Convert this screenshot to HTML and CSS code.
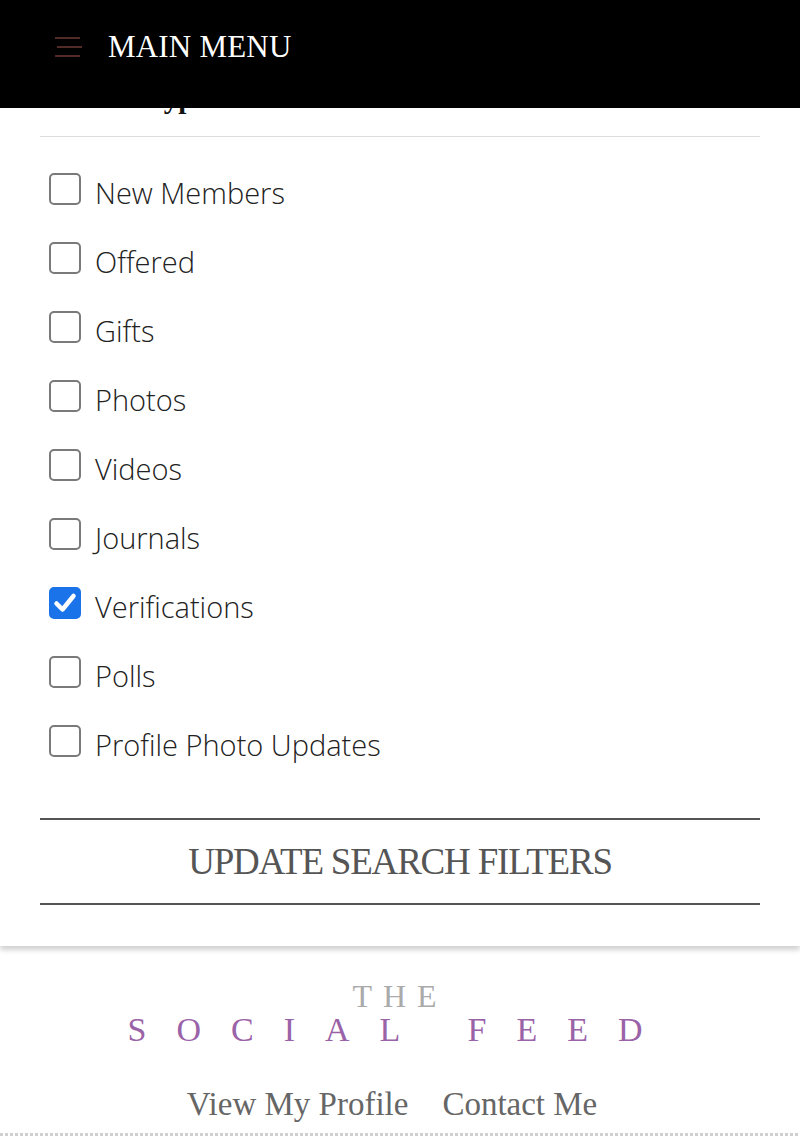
FILE: index.html
```html
<!DOCTYPE html>
<html lang="en">
<head>
  <meta charset="UTF-8">
  <meta name="viewport" content="width=device-width, initial-scale=1.0">
  <title>The Social Feed - Filters</title>
  <link rel="stylesheet" href="styles.css">
</head>
<body>
  <header class="topbar">
    <svg class="burger" width="30" height="22" viewBox="0 0 30 22">
      <line x1="1" y1="2" x2="26" y2="2" />
      <line x1="3" y1="11" x2="28" y2="11" />
      <line x1="1" y1="20" x2="26" y2="20" />
    </svg>
    <span class="menu-label">MAIN MENU</span>
  </header>

  <section class="card">
    <h2 class="card-title">Content Types</h2>

    <ul class="filters">
      <li><span class="box"></span><span class="label">New Members</span></li>
      <li><span class="box"></span><span class="label">Offered</span></li>
      <li><span class="box"></span><span class="label">Gifts</span></li>
      <li><span class="box"></span><span class="label">Photos</span></li>
      <li><span class="box"></span><span class="label">Videos</span></li>
      <li><span class="box"></span><span class="label">Journals</span></li>
      <li><span class="box checked">
        <svg width="26" height="26" viewBox="0 0 26 26"><path d="M4.5 13.5 L10.5 19.5 L21.5 6" /></svg>
      </span><span class="label">Verifications</span></li>
      <li><span class="box"></span><span class="label">Polls</span></li>
      <li><span class="box"></span><span class="label">Profile Photo Updates</span></li>
    </ul>

    <button class="update-btn">UPDATE SEARCH FILTERS</button>
  </section>

  <footer class="footer">
    <div class="logo">
      <div class="logo-the">THE</div>
      <div class="logo-name">SOCIAL FEED</div>
    </div>
    <nav class="footer-links">
      <a href="#">View My Profile</a>
      <a href="#">Contact Me</a>
    </nav>
    <div class="dots"></div>
  </footer>
</body>
</html>
```

FILE: styles.css
```css
* {
  margin: 0;
  padding: 0;
  box-sizing: border-box;
}
body {
  background: #ffffff;
  font-family: 'Liberation Serif', serif;
  color: #222;
}
.topbar {
  position: fixed;
  top: 0;
  left: 0;
  right: 0;
  height: 108px;
  background: #000;
  display: flex;
  align-items: center;
  padding: 0 0 14px 54px;
  z-index: 10;
}
.burger {
  stroke: #6e3a36;
  stroke-width: 1.5;
  margin-right: 24px;
}
.menu-label {
  color: #fff;
  font-size: 31px;
  letter-spacing: 0.2px;
}
.card {
  padding: 0 40px 41px;
  box-shadow: 0 4px 5px rgba(0,0,0,0.18);
}
.card-title {
  font-size: 29px;
  font-weight: 700;
  line-height: 36px;
  padding-top: 80px;
  padding-bottom: 20px;
  border-bottom: 1px solid #dcdcdc;
  color: #111;
}
.filters {
  list-style: none;
  padding: 17px 0 43px 9px;
}
.filters li {
  display: flex;
  align-items: center;
  height: 69px;
  gap: 14px;
  font-family: 'Open Sans', sans-serif;
  font-weight: 300;
  font-size: 29px;
  color: #222;
}
.label {
  padding-top: 8px;
}
.box {
  width: 32px;
  height: 32px;
  border: 2px solid #7a7a7a;
  border-radius: 5px;
  flex-shrink: 0;
  display: flex;
  align-items: center;
  justify-content: center;
}
.box.checked {
  background: #1a73e8;
  border-color: #1a73e8;
}
.box svg path {
  fill: none;
  stroke: #fff;
  stroke-width: 4.5;
  stroke-linecap: round;
  stroke-linejoin: round;
}
.update-btn {
  display: block;
  width: 100%;
  height: 87px;
  background: none;
  border: none;
  border-top: 2px solid #555;
  border-bottom: 2px solid #555;
  font-family: 'Liberation Serif', serif;
  font-size: 37px;
  letter-spacing: -1.2px;
  color: #555;
}
.footer {
  text-align: center;
  padding-top: 35px;
}
.logo-the {
  font-size: 32px;
  letter-spacing: 11px;
  color: #aaa;
  line-height: 30px;
}
.logo-name {
  margin-top: 4px;
  font-size: 34px;
  letter-spacing: 30px;
  color: #9a63a8;
  line-height: 30px;
}
.footer-links {
  display: flex;
  justify-content: center;
  gap: 34px;
  padding: 41px 16px 0 0;
}
.footer-links a {
  color: #666;
  font-size: 33px;
  text-decoration: none;
}
.dots {
  margin-top: 10px;
  height: 3px;
  background: repeating-linear-gradient(90deg, #cfcfcf 0 3px, transparent 3px 5px);
}
```
